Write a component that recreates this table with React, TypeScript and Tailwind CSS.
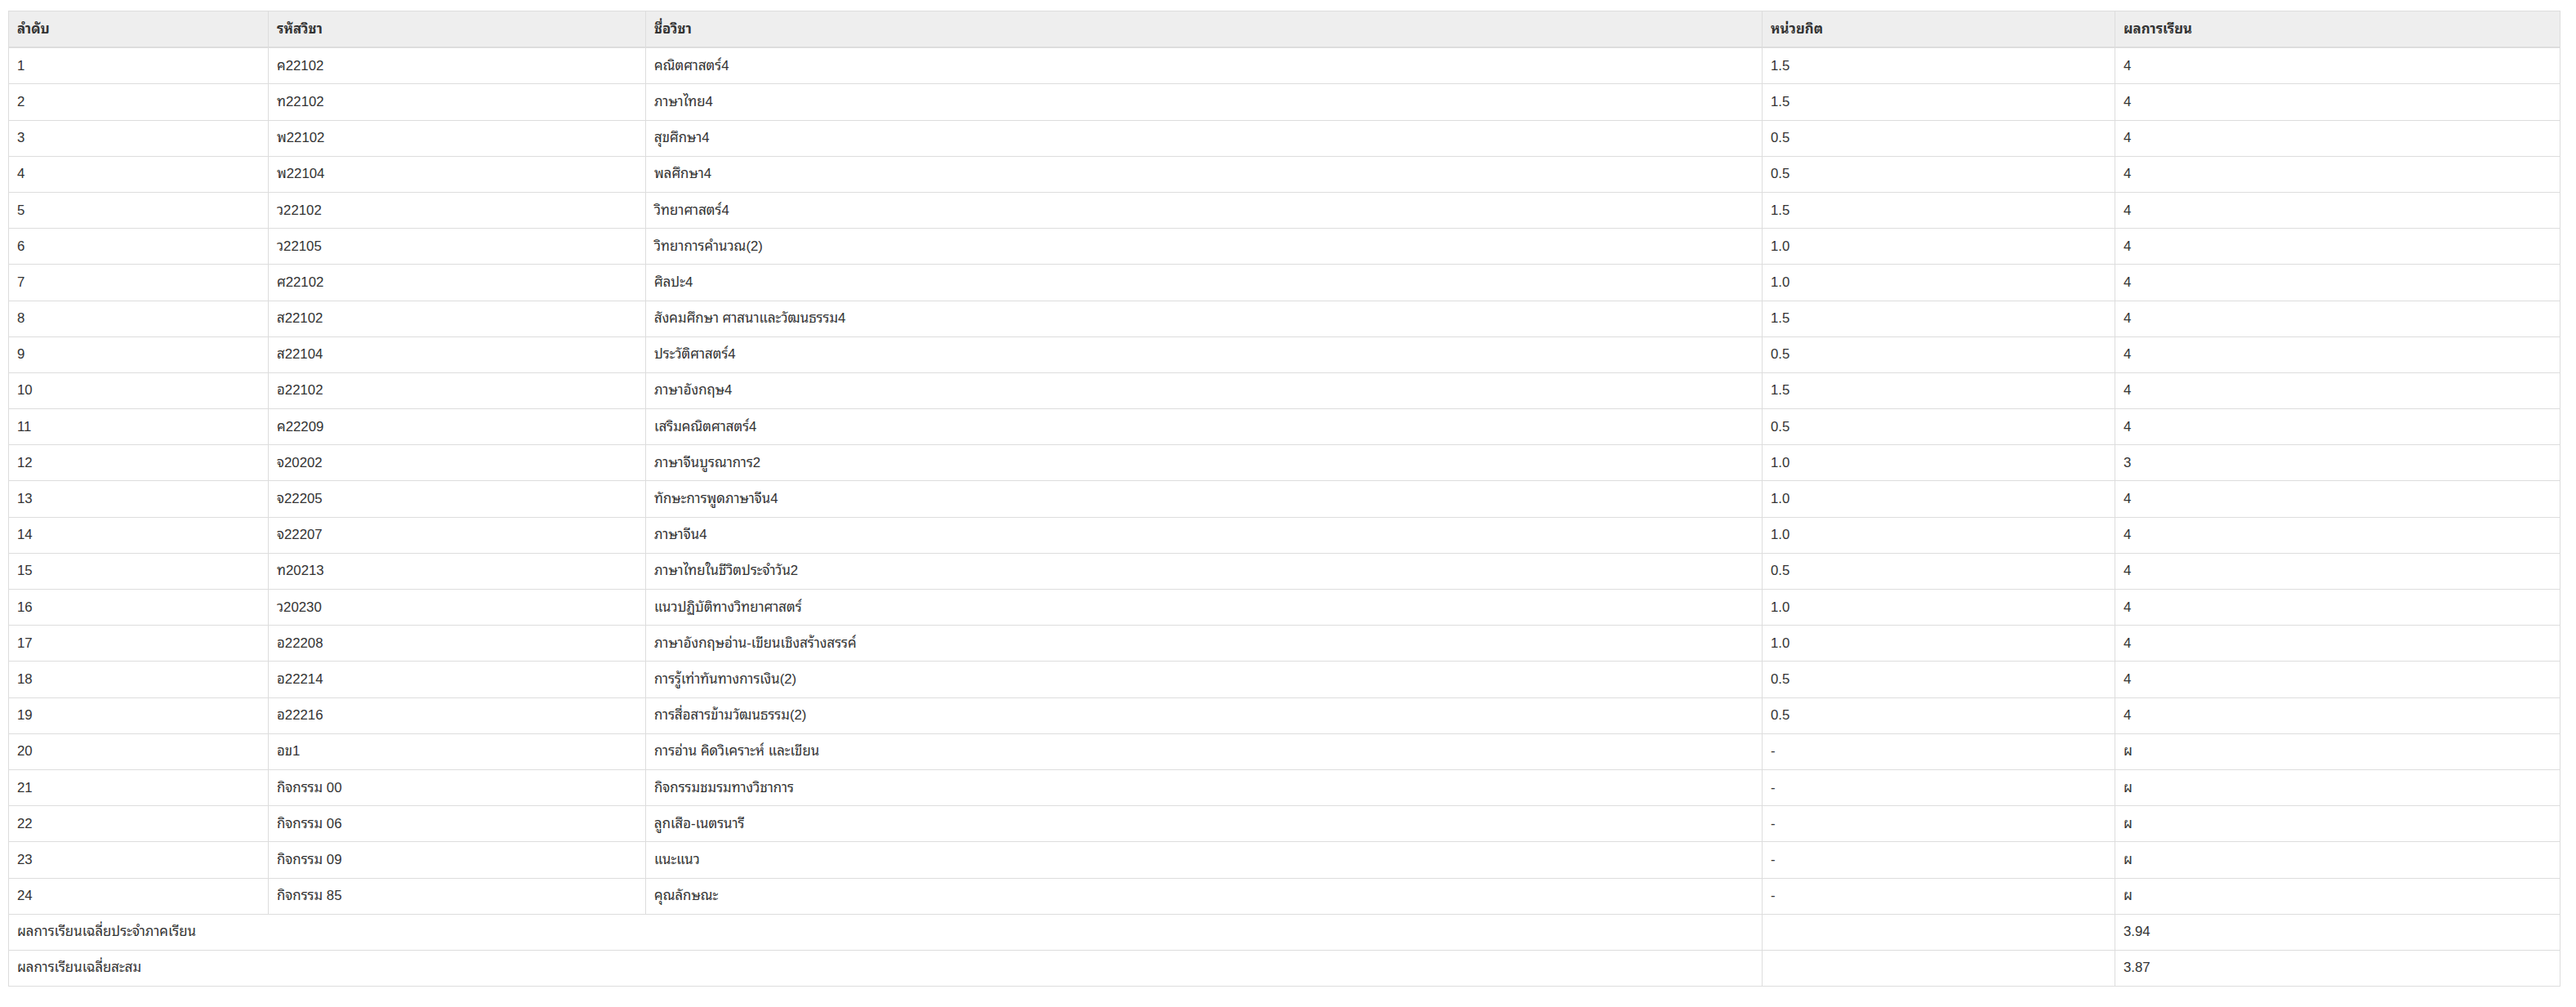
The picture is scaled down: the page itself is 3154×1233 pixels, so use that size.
import React from 'react';

type Row = { no: number; code: string; name: string; credit: string; grade: string };

const ROWS: Row[] = [
  { no: 1, code: 'ค22102', name: 'คณิตศาสตร์4', credit: '1.5', grade: '4' },
  { no: 2, code: 'ท22102', name: 'ภาษาไทย4', credit: '1.5', grade: '4' },
  { no: 3, code: 'พ22102', name: 'สุขศึกษา4', credit: '0.5', grade: '4' },
  { no: 4, code: 'พ22104', name: 'พลศึกษา4', credit: '0.5', grade: '4' },
  { no: 5, code: 'ว22102', name: 'วิทยาศาสตร์4', credit: '1.5', grade: '4' },
  { no: 6, code: 'ว22105', name: 'วิทยาการคำนวณ(2)', credit: '1.0', grade: '4' },
  { no: 7, code: 'ศ22102', name: 'ศิลปะ4', credit: '1.0', grade: '4' },
  { no: 8, code: 'ส22102', name: 'สังคมศึกษา ศาสนาและวัฒนธรรม4', credit: '1.5', grade: '4' },
  { no: 9, code: 'ส22104', name: 'ประวัติศาสตร์4', credit: '0.5', grade: '4' },
  { no: 10, code: 'อ22102', name: 'ภาษาอังกฤษ4', credit: '1.5', grade: '4' },
  { no: 11, code: 'ค22209', name: 'เสริมคณิตศาสตร์4', credit: '0.5', grade: '4' },
  { no: 12, code: 'จ20202', name: 'ภาษาจีนบูรณาการ2', credit: '1.0', grade: '3' },
  { no: 13, code: 'จ22205', name: 'ทักษะการพูดภาษาจีน4', credit: '1.0', grade: '4' },
  { no: 14, code: 'จ22207', name: 'ภาษาจีน4', credit: '1.0', grade: '4' },
  { no: 15, code: 'ท20213', name: 'ภาษาไทยในชีวิตประจำวัน2', credit: '0.5', grade: '4' },
  { no: 16, code: 'ว20230', name: 'แนวปฏิบัติทางวิทยาศาสตร์', credit: '1.0', grade: '4' },
  { no: 17, code: 'อ22208', name: 'ภาษาอังกฤษอ่าน-เขียนเชิงสร้างสรรค์', credit: '1.0', grade: '4' },
  { no: 18, code: 'อ22214', name: 'การรู้เท่าทันทางการเงิน(2)', credit: '0.5', grade: '4' },
  { no: 19, code: 'อ22216', name: 'การสื่อสารข้ามวัฒนธรรม(2)', credit: '0.5', grade: '4' },
  { no: 20, code: 'อข1', name: 'การอ่าน คิดวิเคราะห์ และเขียน', credit: '-', grade: 'ผ' },
  { no: 21, code: 'กิจกรรม 00', name: 'กิจกรรมชมรมทางวิชาการ', credit: '-', grade: 'ผ' },
  { no: 22, code: 'กิจกรรม 06', name: 'ลูกเสือ-เนตรนารี', credit: '-', grade: 'ผ' },
  { no: 23, code: 'กิจกรรม 09', name: 'แนะแนว', credit: '-', grade: 'ผ' },
  { no: 24, code: 'กิจกรรม 85', name: 'คุณลักษณะ', credit: '-', grade: 'ผ' },
];

const th = 'border border-[#dddddd] border-b-2 px-[10px] py-[9.6px] text-left align-bottom font-bold';
const td = 'border border-[#dddddd] px-[10px] py-[9.6px] align-top';

export default function App() {
  return (
    <div className="min-h-screen bg-white pl-[10px] pt-[13px] font-['Liberation_Sans','Tahoma','Noto_Sans_Thai_Looped','Noto_Serif_Thai','Noto_Sans_Thai',sans-serif] text-[16.8px] leading-[24px] text-[#333333]">
      <table className="w-[3124px] table-fixed border-collapse">
        <colgroup>
          <col className="w-[318px]" />
          <col className="w-[462px]" />
          <col className="w-[1367px]" />
          <col className="w-[432px]" />
          <col className="w-[545px]" />
        </colgroup>
        <thead>
          <tr className="bg-[#eeeeee]">
            <th className={th}>ลำดับ</th>
            <th className={th}>รหัสวิชา</th>
            <th className={th}>ชื่อวิชา</th>
            <th className={th}>หน่วยกิต</th>
            <th className={th}>ผลการเรียน</th>
          </tr>
        </thead>
        <tbody>
          {ROWS.map((r) => (
            <tr key={r.no}>
              <td className={td}>{r.no}</td>
              <td className={td}>{r.code}</td>
              <td className={td}>{r.name}</td>
              <td className={td}>{r.credit}</td>
              <td className={td}>{r.grade}</td>
            </tr>
          ))}
          <tr>
            <td className={td} colSpan={3}>ผลการเรียนเฉลี่ยประจำภาคเรียน</td>
            <td className={td}></td>
            <td className={td}>3.94</td>
          </tr>
          <tr>
            <td className={td} colSpan={3}>ผลการเรียนเฉลี่ยสะสม</td>
            <td className={td}></td>
            <td className={td}>3.87</td>
          </tr>
        </tbody>
      </table>
    </div>
  );
}
